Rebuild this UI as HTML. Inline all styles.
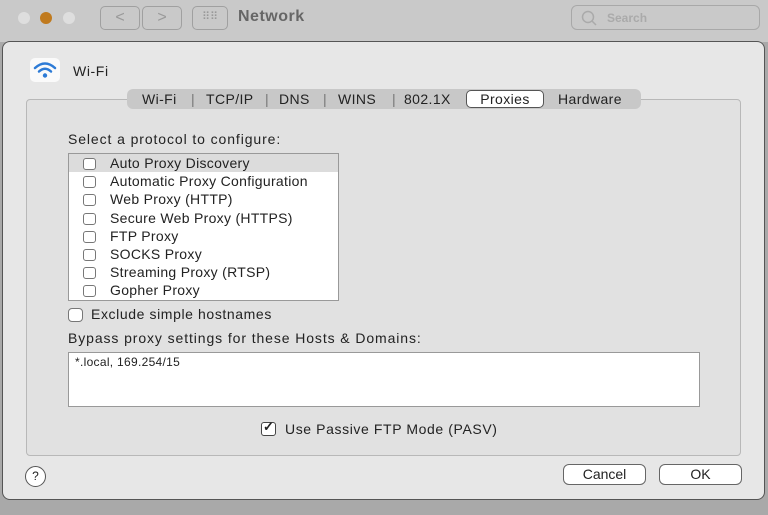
<!DOCTYPE html>
<html><head><meta charset="utf-8"><style>
*{box-sizing:border-box;margin:0;padding:0}
body{width:768px;height:515px;overflow:hidden;background:#a9a9a9;font-family:"Liberation Sans",sans-serif;color:#222;position:relative}
.abs{position:absolute}
.title{left:0;top:0;width:768px;height:42px;background:#c9c9c9}
.dot{width:12px;height:12px;border-radius:50%;top:12px}
.btn{border:1px solid #a0a0a0;border-radius:5px;height:24px;top:6px}
.sheet{left:2px;top:41px;width:763px;height:459px;background:#e7e7e7;border:1px solid #555;border-radius:8px}
.panel{left:26px;top:99px;width:715px;height:357px;border:1px solid #b8b8b8;border-radius:4px;background:#e1e1e1}
.tabs{left:127px;top:89px;width:514px;height:20px;background:#c8c8c8;border-radius:6px;font-size:14px;letter-spacing:.4px;line-height:20px}
.tabs span{position:absolute;top:0}
.cb{width:13px;height:12px;border:1px solid #777;border-radius:3px;background:#fff}
.t13{font-size:14px;letter-spacing:.9px}
.list{font-size:14px;letter-spacing:.3px}
.pb{border:1px solid #666;border-radius:6px;background:#fff;height:21px;font-size:14px;text-align:center;line-height:19px}
</style></head><body>
<div class="abs title"></div>
<div class="abs dot" style="left:18px;background:#dedede"></div>
<div class="abs dot" style="left:40px;background:#c07a1e"></div>
<div class="abs dot" style="left:63px;background:#dedede"></div>
<div class="abs btn" style="left:100px;width:40px;color:#999;text-align:center;font-size:16px;line-height:22px">&lt;</div>
<div class="abs btn" style="left:142px;width:40px;color:#999;text-align:center;font-size:16px;line-height:22px">&gt;</div>
<div class="abs btn" style="left:192px;width:36px;color:#999;text-align:center;font-size:11px;line-height:20px">⠿⠿</div>
<div class="abs" style="left:238px;top:8px;font-size:16px;letter-spacing:.5px;font-weight:bold;color:#666">Network</div>
<div class="abs" style="left:571px;top:5px;width:189px;height:25px;border:1px solid #a8a8a8;border-radius:6px"></div>
<svg class="abs" style="left:580px;top:9px" width="18" height="18"><circle cx="8" cy="8" r="5.5" fill="none" stroke="#aaa" stroke-width="1.5"/><line x1="12" y1="12" x2="16" y2="16" stroke="#aaa" stroke-width="1.5"/></svg>
<div class="abs" style="left:607px;top:11px;font-size:12px;color:#aaa;font-weight:bold">Search</div>

<div class="abs sheet"></div>
<div class="abs" style="left:30px;top:58px;width:30px;height:24px;background:#fafafa;border-radius:5px"></div>
<svg class="abs" style="left:31px;top:59px" width="28" height="22"><g fill="none" stroke="#2d7bd6" stroke-width="2.5" stroke-linecap="round"><path d="M4 9 Q14 0 24 9"/><path d="M8 12.5 Q14 7 20 12.5"/></g><circle cx="14" cy="16.5" r="2.2" fill="#2d7bd6"/></svg>
<div class="abs" style="left:73px;top:63px;font-size:14px;letter-spacing:.6px">Wi-Fi</div>

<div class="abs panel"></div>
<div class="abs tabs">
<span style="left:15px">Wi-Fi</span><span style="left:64px;color:#777">|</span>
<span style="left:79px">TCP/IP</span><span style="left:138px;color:#777">|</span>
<span style="left:152px">DNS</span><span style="left:196px;color:#777">|</span>
<span style="left:211px">WINS</span><span style="left:265px;color:#777">|</span>
<span style="left:277px">802.1X</span>
<span style="left:339px;top:1px;width:78px;height:18px;background:#fff;border:1px solid #555;border-radius:5px;line-height:16px;text-align:center">Proxies</span>
<span style="left:431px">Hardware</span>
</div>

<div class="abs t13" style="left:68px;top:131px">Select a protocol to configure:</div>
<div class="abs" style="left:68px;top:153px;width:271px;height:148px;background:#fff;border:1px solid #999"></div>
<div class="abs" style="left:69px;top:154px;width:269px;height:18px;background:#dcdcdc"></div>
<div class="abs list" style="left:83px;top:154px;line-height:18.2px">
<div><span class="cb" style="display:inline-block;vertical-align:-2px;margin-right:14px"></span>Auto Proxy Discovery</div>
<div><span class="cb" style="display:inline-block;vertical-align:-2px;margin-right:14px"></span>Automatic Proxy Configuration</div>
<div><span class="cb" style="display:inline-block;vertical-align:-2px;margin-right:14px"></span>Web Proxy (HTTP)</div>
<div><span class="cb" style="display:inline-block;vertical-align:-2px;margin-right:14px"></span>Secure Web Proxy (HTTPS)</div>
<div><span class="cb" style="display:inline-block;vertical-align:-2px;margin-right:14px"></span>FTP Proxy</div>
<div><span class="cb" style="display:inline-block;vertical-align:-2px;margin-right:14px"></span>SOCKS Proxy</div>
<div><span class="cb" style="display:inline-block;vertical-align:-2px;margin-right:14px"></span>Streaming Proxy (RTSP)</div>
<div><span class="cb" style="display:inline-block;vertical-align:-2px;margin-right:14px"></span>Gopher Proxy</div>
</div>
<div class="abs cb" style="left:68px;top:308px;width:15px;height:14px;border-radius:4px"></div>
<div class="abs t13" style="left:91px;top:306px;letter-spacing:.6px">Exclude simple hostnames</div>
<div class="abs t13" style="left:68px;top:330px">Bypass proxy settings for these Hosts &amp; Domains:</div>
<div class="abs" style="left:68px;top:352px;width:632px;height:55px;background:#fff;border:1px solid #999;font-size:12px;letter-spacing:.3px;padding:2px 6px">*.local, 169.254/15</div>
<div class="abs cb" style="left:261px;top:422px;width:15px;height:14px;border:1px solid #444"></div>
<div class="abs" style="left:263px;top:419px;font-size:13px;font-weight:bold">✓</div>
<div class="abs" style="left:285px;top:421px;font-size:14px;letter-spacing:.6px">Use Passive FTP Mode (PASV)</div>

<div class="abs" style="left:25px;top:466px;width:21px;height:21px;border:1px solid #555;border-radius:50%;background:#fff;font-size:12px;text-align:center;line-height:19px">?</div>
<div class="abs pb" style="left:563px;top:464px;width:83px">Cancel</div>
<div class="abs pb" style="left:659px;top:464px;width:83px">OK</div>
</body></html>
